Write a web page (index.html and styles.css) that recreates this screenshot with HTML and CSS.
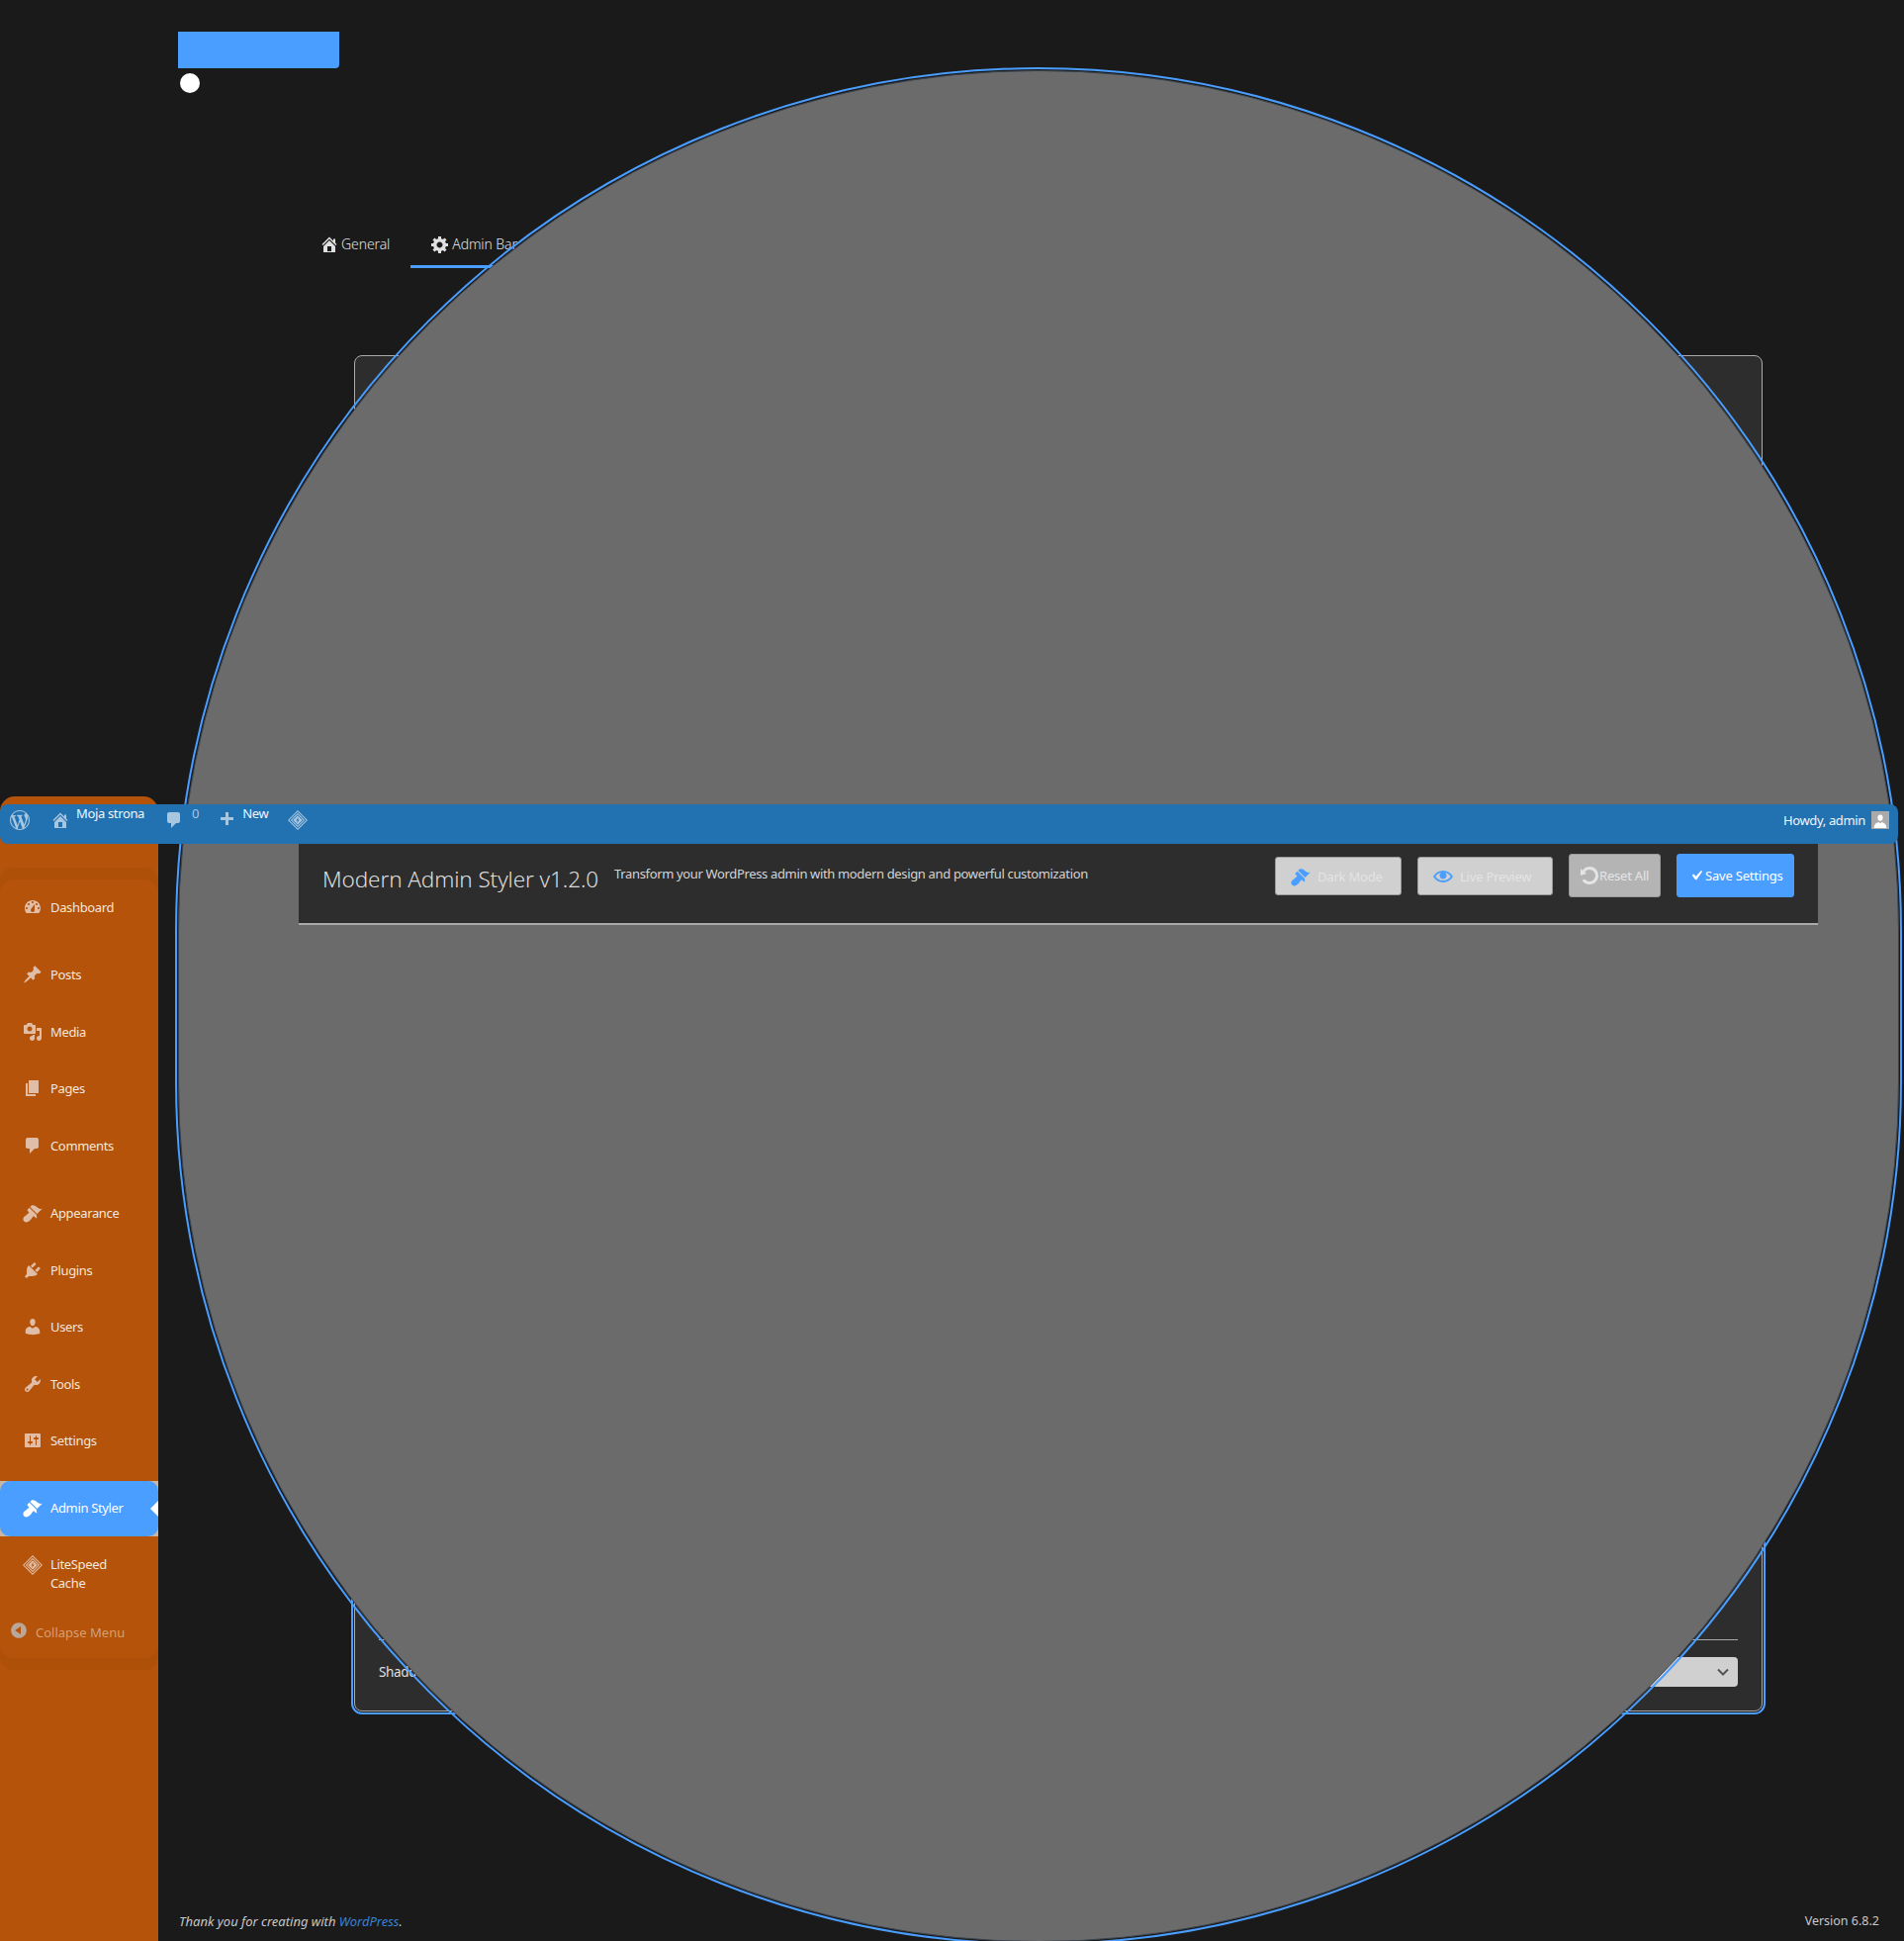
FILE: index.html
```html
<!DOCTYPE html>
<html lang="en">
<head>
  <meta charset="UTF-8">
  <title>Modern Admin Styler</title>
  <link rel="stylesheet" href="styles.css">
</head>
<body>

  <svg class="sprites" width="0" height="0">
    <symbol id="i-wp" viewBox="0 0 20 20"><path d="M20 10c0-5.51-4.49-10-10-10C4.48 0 0 4.49 0 10c0 5.52 4.48 10 10 10 5.51 0 10-4.48 10-10zM7.78 15.37L4.37 6.22c.55-.02 1.17-.08 1.17-.08.5-.06.44-1.13-.06-1.11 0 0-1.45.11-2.37.11-.18 0-.37 0-.58-.01C4.12 2.69 6.87 1.11 10 1.11c2.33 0 4.45.87 6.05 2.34-.68-.11-1.65.39-1.65 1.58 0 .74.45 1.36.9 2.1.35.61.55 1.36.55 2.46 0 1.49-1.4 5-1.4 5l-3.03-8.37c.54-.02.82-.17.82-.17.5-.05.44-1.25-.06-1.22 0 0-1.44.12-2.38.12-.87 0-2.33-.12-2.33-.12-.5-.03-.56 1.2-.06 1.22l.92.08 1.26 3.41zM17.41 10c.24-.64.74-1.87.43-4.25.7 1.29 1.05 2.71 1.05 4.25 0 3.29-1.73 6.24-4.4 7.78.97-2.59 1.94-5.2 2.92-7.78zM6.1 18.09C3.12 16.65 1.11 13.53 1.11 10c0-1.3.23-2.48.72-3.59C3.25 10.3 4.67 14.2 6.1 18.09zm4.03-6.63l2.58 6.98c-.86.29-1.76.45-2.71.45-.79 0-1.57-.11-2.29-.33.81-2.38 1.62-4.74 2.42-7.1z"/></symbol>
    <symbol id="i-home" viewBox="0 0 20 20"><path d="M16 8.5l1.53 1.53-1.06 1.06L10 4.62l-6.47 6.47-1.06-1.06L10 2.5l4 4v-2h2v4zm-6-2.46l6 5.99V18H4v-5.97zM12 17v-5H8v5h4z"/></symbol>
    <symbol id="i-comment" viewBox="0 0 20 20"><path d="M5 2h9c1.1 0 2 .9 2 2v7c0 1.1-.9 2-2 2h-2l-5 5v-5H5c-1.1 0-2-.9-2-2V4c0-1.1.9-2 2-2z"/></symbol>
    <symbol id="i-plus" viewBox="0 0 20 20"><path d="M17 7v3h-5v5H9v-5H4V7h5V2h3v5h5z"/></symbol>
    <symbol id="i-diamond" viewBox="0 0 20 20"><path fill-rule="evenodd" d="M10 0l10 10-10 10L0 10zM10 1.400L1.400 10l8.600 8.600 8.600-8.600zM10 2.800l7.200 7.200-7.200 7.200L2.800 10zM10 4.200L4.200 10l5.800 5.800 5.800-5.800z"/><path fill-rule="evenodd" d="M10 5.200l4.800 4.800-4.800 4.800L5.200 10zM10.800 6.800L8.400 10.400h1.500l-.7 2.800 2.400-3.600h-1.500z"/></symbol>
    <symbol id="i-dashboard" viewBox="0 0 20 20"><path d="M3.76 16h12.48c1.1-1.37 1.76-3.11 1.76-5 0-4.42-3.58-8-8-8s-8 3.58-8 8c0 1.89.66 3.63 1.76 5zM10 4c.55 0 1 .45 1 1s-.45 1-1 1-1-.45-1-1 .45-1 1-1zM6 6c.55 0 1 .45 1 1s-.45 1-1 1-1-.45-1-1 .45-1 1-1zm8 0c.55 0 1 .45 1 1s-.45 1-1 1-1-.45-1-1 .45-1 1-1zm-5.37 5.55L12 7v6c0 1.1-.9 2-2 2s-2-.9-2-2c0-.57.24-1.08.63-1.45zM4 10c.55 0 1 .45 1 1s-.45 1-1 1-1-.45-1-1 .45-1 1-1zm12 0c.55 0 1 .45 1 1s-.45 1-1 1-1-.45-1-1 .45-1 1-1z"/></symbol>
    <symbol id="i-post" viewBox="0 0 20 20"><path d="M10.44 3.02l1.82-1.82 6.36 6.35-1.83 1.82c-1.05-.68-2.48-.57-3.41.36l-.75.75c-.92.93-1.04 2.35-.35 3.41l-1.83 1.82-2.41-2.41-2.8 2.79c-.42.42-3.38 2.71-3.8 2.29s1.86-3.39 2.28-3.81l2.79-2.79L4.1 9.36l1.83-1.82c1.05.69 2.48.57 3.4-.36l.75-.75c.93-.92 1.05-2.35.36-3.41z"/></symbol>
    <symbol id="i-media" viewBox="0 0 20 20"><path d="M13 11V4c0-.55-.45-1-1-1h-1.67L9 1H5L3.67 3H2c-.55 0-1 .45-1 1v7c0 .55.45 1 1 1h10c.55 0 1-.45 1-1zM7 4.5c1.38 0 2.5 1.12 2.5 2.5S8.38 9.5 7 9.5 4.5 8.38 4.5 7 5.62 4.5 7 4.5zM14 6h5v10.5c0 1.38-1.12 2.5-2.5 2.5S14 17.88 14 16.5s1.12-2.5 2.5-2.5c.17 0 .34.02.5.05V9h-3V6zm-4 8.05V13h2v3.5c0 1.38-1.12 2.5-2.5 2.5S7 17.88 7 16.5 8.12 14 9.5 14c.17 0 .34.02.5.05z"/></symbol>
    <symbol id="i-page" viewBox="0 0 20 20"><path d="M6 15V2h10v13H6zm-1 1h8v2H3V5h2v11z"/></symbol>
    <symbol id="i-brush" viewBox="0 0 20 20"><path d="M14.48 11.06L7.41 3.99l1.5-1.5c.5-.56 2.3-.47 3.51.32 1.21.8 1.43 1.28 2.91 2.1 1.18.64 2.45 1.26 4.45.85zm-.71.71L6.7 4.7 4.93 6.47c-.39.39-.39 1.02 0 1.41l1.06 1.06c.39.39.39 1.03 0 1.42-.6.6-1.43 1.11-2.21 1.69-.35.26-.7.53-1.01.84C1.43 13.23.4 14.67.4 16.23c0 .81.32 1.63.94 2.24.56.56 1.37.94 2.27.94 1.47 0 2.84-1.03 4.28-2.37.3-.31.58-.66.84-1.01.58-.78 1.09-1.61 1.69-2.21.39-.39 1.03-.39 1.42 0l1.06 1.06c.39.39 1.02.39 1.41 0z"/></symbol>
    <symbol id="i-plugin" viewBox="0 0 20 20"><path d="M13.11 4.36L9.87 7.6 8 5.73l3.24-3.24c.35-.34 1.05-.2 1.56.32.52.51.66 1.21.31 1.55zm-8 1.77l.91-1.12 9.01 9.01-1.19.84c-.71.71-2.63 1.16-3.82 1.16H6.14L4.9 17.26c-.59.59-1.54.59-2.12 0-.59-.58-.59-1.53 0-2.12l1.24-1.24v-3.88c0-1.13.4-3.19 1.09-3.89zm7.26 3.97l3.24-3.24c.34-.35 1.04-.21 1.55.31.52.51.66 1.21.31 1.55l-3.24 3.25z"/></symbol>
    <symbol id="i-user" viewBox="0 0 20 20"><path d="M10 9.25c-2.27 0-2.73-3.44-2.73-3.44C7 4.02 7.82 2 9.97 2c2.16 0 2.98 2.02 2.71 3.81 0 0-.41 3.44-2.68 3.44zm0 2.57L12.72 10c2.39 0 4.52 2.33 4.52 4.53v2.49s-3.65 1.13-7.24 1.13c-3.65 0-7.24-1.13-7.24-1.13v-2.49c0-2.25 1.94-4.48 4.47-4.48z"/></symbol>
    <symbol id="i-tools" viewBox="0 0 20 20"><path d="M16.68 9.77c-1.34 1.34-3.3 1.67-4.95.99l-5.41 6.52c-.99.99-2.59.99-3.58 0s-.99-2.59 0-3.57l6.52-5.42c-.68-1.65-.35-3.61.99-4.95 1.28-1.28 3.12-1.62 4.72-1.06l-2.89 2.89 2.82 2.82 2.86-2.87c.53 1.58.18 3.39-1.08 4.65zM3.81 16.21c.4.39 1.04.39 1.43 0 .4-.4.4-1.04 0-1.43-.39-.4-1.03-.4-1.43 0-.39.39-.39 1.03 0 1.43z"/></symbol>
    <symbol id="i-settings" viewBox="0 0 20 20"><path d="M18 16V4c0-.55-.45-1-1-1H3c-.55 0-1 .45-1 1v12c0 .55.45 1 1 1h14c.55 0 1-.45 1-1zM8 11h1c.55 0 1 .45 1 1s-.45 1-1 1H8v1.5c0 .28-.22.5-.5.5s-.5-.22-.5-.5V13H6c-.55 0-1-.45-1-1s.45-1 1-1h1V5.5c0-.28.22-.5.5-.5s.5.22.5.5V11zm5-2h-1c-.55 0-1-.45-1-1s.45-1 1-1h1V5.5c0-.28.22-.5.5-.5s.5.22.5.5V7h1c.55 0 1 .45 1 1s-.45 1-1 1h-1v5.5c0 .28-.22.5-.5.5s-.5-.22-.5-.5V9z"/></symbol>
    <symbol id="i-collapse" viewBox="0 0 20 20"><path d="M10 2.16c4.33 0 7.84 3.51 7.84 7.84s-3.51 7.84-7.84 7.84S2.16 14.33 2.16 10 5.71 2.16 10 2.16zm2 11.72V6.12L6.18 9.97z"/></symbol>
    <symbol id="i-gear" viewBox="0 0 20 20"><path d="M18 12h-2.18c-.17.7-.44 1.35-.81 1.93l1.54 1.54-2.1 2.1-1.54-1.54c-.58.36-1.23.63-1.91.79V19H8v-2.18c-.68-.16-1.33-.43-1.91-.79l-1.54 1.54-2.12-2.12 1.54-1.54c-.36-.58-.63-1.23-.79-1.91H1V9.03h2.17c.16-.7.44-1.35.8-1.94L2.43 5.55l2.1-2.1 1.54 1.54c.58-.37 1.24-.64 1.93-.81V2h3v2.18c.68.16 1.33.43 1.91.79l1.54-1.54 2.12 2.12-1.54 1.54c.36.59.64 1.24.8 1.94H18V12zm-8.5 1.5c1.66 0 3-1.34 3-3s-1.34-3-3-3-3 1.34-3 3 1.34 3 3 3z"/></symbol>
    <symbol id="i-eye" viewBox="0 0 20 20"><path d="M19.7 9.4C17.7 6 14 3.9 10 3.9S2.3 6 .3 9.4L0 10l.3.6c2 3.4 5.7 5.5 9.7 5.5s7.7-2.1 9.7-5.5l.3-.6-.3-.6zM10 14.1c-3.1 0-6-1.6-7.7-4.1C3.6 8 5.7 6.6 8 6.1c-.9.6-1.5 1.7-1.5 2.9 0 1.9 1.6 3.5 3.5 3.5s3.5-1.6 3.5-3.5c0-1.2-.6-2.3-1.5-2.9 2.3.5 4.4 1.9 5.7 3.9-1.7 2.5-4.6 4.1-7.7 4.1z"/></symbol>
    <symbol id="i-rotate" viewBox="0 0 20 20"><path d="M10.25 1.02c5.1 0 8.75 4.04 8.75 9s-3.65 9-8.75 9c-3.2 0-6.02-1.59-7.68-3.99l2.59-1.52c1.1 1.5 2.86 2.51 4.84 2.51 3.3 0 6-2.79 6-6s-2.7-6-6-6c-1.97 0-3.72 1-4.82 2.49L7 8.02l-6 2v-7L2.89 4.9c1.69-2.32 4.36-3.88 7.36-3.88z"/></symbol>
    <symbol id="i-check" viewBox="0 0 20 20"><path d="M14.83 4.89l1.34.94-5.81 8.38H9.02L5.78 9.67l1.34-1.25 2.57 2.4z"/></symbol>
  </svg>

  <div class="page">

    <aside class="sidebar">
      <div class="menu-outer">
        <ul class="menu">
          <li class="menu-item"><svg class="menu-icon"><use href="#i-dashboard"/></svg>Dashboard</li>
          <li class="menu-item menu-gap"><svg class="menu-icon"><use href="#i-post"/></svg>Posts</li>
          <li class="menu-item"><svg class="menu-icon"><use href="#i-media"/></svg>Media</li>
          <li class="menu-item"><svg class="menu-icon"><use href="#i-page"/></svg>Pages</li>
          <li class="menu-item"><svg class="menu-icon"><use href="#i-comment"/></svg>Comments</li>
          <li class="menu-item menu-gap"><svg class="menu-icon"><use href="#i-brush"/></svg>Appearance</li>
          <li class="menu-item"><svg class="menu-icon"><use href="#i-plugin"/></svg>Plugins</li>
          <li class="menu-item"><svg class="menu-icon"><use href="#i-user"/></svg>Users</li>
          <li class="menu-item"><svg class="menu-icon"><use href="#i-tools"/></svg>Tools</li>
          <li class="menu-item"><svg class="menu-icon"><use href="#i-settings"/></svg>Settings</li>
          <li class="menu-current menu-gap">
            <div class="menu-item menu-item-active"><svg class="menu-icon"><use href="#i-brush"/></svg>Admin Styler</div>
          </li>
          <li class="menu-item menu-item-tall"><svg class="menu-icon"><use href="#i-diamond"/></svg><span>LiteSpeed<br>Cache</span></li>
          <li class="menu-collapse"><svg class="collapse-icon"><use href="#i-collapse"/></svg>Collapse Menu</li>
        </ul>
      </div>
    </aside>

    <main class="main">
      <div class="toggle-bar"></div>
      <div class="toggle-knob"></div>

      <nav class="tabs">
        <a class="tab"><svg class="tab-icon"><use href="#i-home"/></svg>General</a>
        <a class="tab tab-active"><svg class="tab-icon"><use href="#i-gear"/></svg>Admin Bar</a>
      </nav>

      <section class="card card-top"></section>

      <section class="card card-focus">
        <div class="card-row">
          <span>Shadow</span>
          <div class="select">
            <svg class="chevron" viewBox="0 0 12 8"><path d="M1 1.5l5 5 5-5"/></svg>
          </div>
        </div>
      </section>

      <footer class="footer">
        <em>Thank you for creating with <a class="footer-link">WordPress</a>.</em>
        <span>Version 6.8.2</span>
      </footer>
    </main>
  </div>

  <!-- the big grey pill sits over the page content -->
  <div class="pill"></div>

  <header class="panel-head">
    <h1 class="panel-title">Modern Admin Styler v1.2.0</h1>
    <p class="panel-sub">Transform your WordPress admin with modern design and powerful customization</p>
    <div class="panel-actions">
      <button class="btn btn-soft"><svg class="btn-icon"><use href="#i-brush"/></svg>Dark Mode</button>
      <button class="btn btn-soft btn-preview"><svg class="btn-icon"><use href="#i-eye"/></svg>Live Preview</button>
      <button class="btn btn-reset"><svg class="btn-icon"><use href="#i-rotate"/></svg>Reset All</button>
      <button class="btn btn-save"><svg class="btn-icon-small"><use href="#i-check"/></svg>Save Settings</button>
    </div>
  </header>

  <div class="adminbar">
    <svg class="bar-logo"><use href="#i-wp"/></svg>
    <svg class="bar-icon bar-home"><use href="#i-home"/></svg>
    <span class="bar-text">Moja strona</span>
    <svg class="bar-icon bar-comment"><use href="#i-comment"/></svg>
    <span class="bar-text bar-count">0</span>
    <svg class="bar-icon bar-plus"><use href="#i-plus"/></svg>
    <span class="bar-text">New</span>
    <svg class="bar-icon bar-diamond"><use href="#i-diamond"/></svg>
    <div class="bar-user">
      <span>Howdy, admin</span>
      <div class="avatar"><svg class="avatar-icon" viewBox="0 0 20 20"><path d="M10 3c2.400 0 3.600 2 3.300 4.400-.2 2-1.400 3.600-3.300 3.600S6.900 9.400 6.700 7.400C6.400 5 7.600 3 10 3zM2 20c.2-4.500 2.800-6.800 6-7.500l2 1.500 2-1.500c3.200.7 5.800 3 6 7.500z"/></svg></div>
    </div>
  </div>

</body>
</html>
```

FILE: styles.css
```css
* {
  box-sizing: border-box;
}

body {
  margin: 0;
  height: 1962px;
  overflow: hidden;
  position: relative;
  background-color: #1a1a1a;
  color: #e0e0e0;
  font-family: "Noto Sans", "Open Sans", sans-serif;
  font-size: 13px;
  letter-spacing: -0.35px;
}

.sprites {
  position: absolute;
}

.page {
  display: flex;
  height: 1962px;
}

/* sidebar */
.sidebar {
  flex: 0 0 160px;
  margin-top: 805px;
  padding-top: 72px;
  background-color: #b45309;
  border-radius: 15px 15px 0 0;
}

.menu-outer {
  padding: 12px 0;
  background-color: #ae5008;
  border-radius: 14px;
}

.menu {
  list-style: none;
  margin: 0;
  padding: 0;
  background-color: #b45309;
  border-radius: 14px;
  height: 787px;
}

.menu-item {
  display: flex;
  align-items: center;
  height: 57.4px;
  padding: 0 0 2px 23px;
  color: #f3e6da;
}

.menu-gap {
  margin-top: 11.4px;
}

.menu-icon {
  width: 20px;
  height: 20px;
  margin-right: 8px;
  fill: #e0bda6;
  flex: none;
}

.menu-current {
  background-color: #c9b6a6;
}

.menu-item-active {
  height: 56px;
  background-color: #4a9eff;
  border-radius: 10px;
  color: #fff;
  position: relative;
}

.menu-item-active .menu-icon {
  fill: #fff;
}

.menu-item-active::after {
  content: "";
  position: absolute;
  right: 0;
  top: 20px;
  border: 8px solid transparent;
  border-right-color: #fff;
  border-left-width: 0;
}

.menu-item-tall {
  align-items: flex-start;
  height: 88px;
  padding-top: 19px;
  line-height: 19px;
}

.menu-collapse {
  display: flex;
  align-items: center;
  padding-left: 9px;
  color: rgba(255, 255, 255, 0.45);
  letter-spacing: 0;
}

.collapse-icon {
  width: 20px;
  height: 20px;
  margin-right: 7px;
  margin-top: -4px;
  fill: #b9a79a;
}

/* main column */
.main {
  flex: 1;
  display: flex;
  flex-direction: column;
  padding-top: 32px;
}

.toggle-bar {
  width: 163px;
  height: 37px;
  margin-left: 20px;
  background-color: #4a9eff;
  border-radius: 0 0 4px 0;
}

.toggle-knob {
  width: 20px;
  height: 20px;
  margin: 5px 0 0 22px;
  background-color: #fff;
  border-radius: 50%;
}

.tabs {
  display: flex;
  margin: 131px 0 0 143px;
}

.tab {
  display: flex;
  align-items: center;
  height: 46px;
  padding: 0 21px 0 20px;
  border-bottom: 3px solid transparent;
  font-size: 14px;
  font-weight: 300;
  letter-spacing: -0.1px;
}

.tab-active {
  border-bottom-color: #4a9eff;
}

.tab-icon {
  width: 20px;
  height: 20px;
  margin-right: 2px;
  fill: #e0e0e0;
}

.card {
  width: 1424px;
  margin-left: 198px;
  background-color: #2d2d2d;
  border: 1px solid #aaa;
  border-radius: 8px;
}

.card-top {
  height: 300px;
  margin-top: 88px;
}

/* top edge of this card stays hidden behind the pill */
.card-focus {
  margin-top: auto;
  height: 500px;
  padding: 426px 24px 0;
  outline: 2px solid #4a9eff;
  outline-offset: 1px;
  font-size: 13.5px;
}

.card-row {
  display: flex;
  justify-content: space-between;
  align-items: center;
  height: 48px;
  padding-top: 16px;
  border-top: 1px solid #aaa;
}

.select {
  display: flex;
  align-items: center;
  justify-content: flex-end;
  width: 250px;
  height: 30px;
  padding-right: 9px;
  background-color: #d0d0d0;
  border-radius: 4px;
}

.chevron {
  width: 12px;
  height: 8px;
  fill: none;
  stroke: #555;
  stroke-width: 2;
}

.footer {
  display: flex;
  justify-content: space-between;
  margin-top: 203px;
  padding: 0 25px 11px 21px;
  line-height: 18px;
  color: #c8c8c8;
  font-size: 13px;
  letter-spacing: 0;
}

.footer span {
  font-size: 12.5px;
}

.footer-link {
  color: #3582d8;
}

/* grey pill */
.pill {
  position: absolute;
  left: 180px;
  top: 71px;
  width: 1740px;
  height: 1892px;
  background-color: #6b6b6b;
  border: 1px solid #3a4450;
  border-radius: 870px;
  outline: 2px solid #4a9eff;
  outline-offset: 1px;
}

/* header panel over the pill */
.panel-head {
  position: absolute;
  left: 302px;
  top: 853px;
  width: 1536px;
  height: 82px;
  display: flex;
  padding: 0 24px;
  background-color: #2d2d2d;
  border-bottom: 2px solid #aaa;
}

.panel-title {
  margin: 20px 16px 0 0;
  font-size: 22.5px;
  font-weight: 300;
  line-height: 32px;
  letter-spacing: -0.1px;
  color: #dcdcdc;
}

.panel-sub {
  margin: 20px 0 0;
  font-size: 13px;
  line-height: 20px;
  color: #d4d4d4;
}

.panel-actions {
  display: flex;
  align-items: flex-start;
  gap: 16px;
  margin-left: auto;
  padding-top: 10px;
}

.btn {
  display: flex;
  align-items: center;
  height: 44px;
  padding: 0 10px;
  border: 1px solid #9a9a9a;
  border-radius: 3px;
  font-family: inherit;
  font-size: 13px;
  letter-spacing: -0.2px;
  color: #e4e4e4;
  white-space: nowrap;
}

.btn-soft {
  height: 39px;
  margin-top: 3px;
  width: 128px;
  padding: 0 15px;
  background-color: #d0d0d0;
}

.btn-preview {
  width: 137px;
}

.btn-soft .btn-icon {
  fill: #4a9eff;
  margin-right: 7px;
}

.btn-reset {
  width: 93px;
  padding: 0 0 0 10px;
  background-color: #b4b4b4;
}

.btn-save {
  width: 119px;
  padding: 0 0 0 13px;
  background-color: #4a9eff;
  border-color: #4a9eff;
  color: #fff;
}

.btn-icon {
  width: 20px;
  height: 20px;
  fill: #e4e4e4;
  flex: none;
}

.btn-icon-small {
  width: 20px;
  height: 20px;
  margin: 0 -1px 0 -4px;
  fill: #fff;
  flex: none;
}

/* admin bar */
.adminbar {
  position: absolute;
  left: 0;
  top: 813px;
  width: 1919px;
  height: 40px;
  display: flex;
  align-items: center;
  padding: 0 9px 0 10px;
  background-color: #2271b1;
  border-radius: 8px;
  color: #f0f5fa;
}

.bar-logo {
  width: 20px;
  height: 20px;
  margin-top: -8px;
  fill: #a7c6e0;
}

.bar-icon {
  width: 20px;
  height: 20px;
  margin-top: -8px;
  fill: #a7c6e0;
}

.bar-home {
  margin-left: 21px;
}

.bar-comment {
  margin-left: 20px;
}

.bar-plus {
  margin-left: 18px;
}

.bar-diamond {
  margin-left: 20px;
}

.bar-text {
  margin: -22px 0 0 6px;
}

.bar-count {
  margin-left: 8px;
  color: #a7c6e0;
}

.bar-user {
  display: flex;
  align-items: center;
  gap: 6px;
  margin-left: auto;
  margin-top: -8px;
}

.avatar {
  width: 18px;
  height: 18px;
  padding: 1px;
  background-color: #aaa;
}

.avatar-icon {
  display: block;
  width: 16px;
  height: 16px;
  fill: #fff;
}
```
